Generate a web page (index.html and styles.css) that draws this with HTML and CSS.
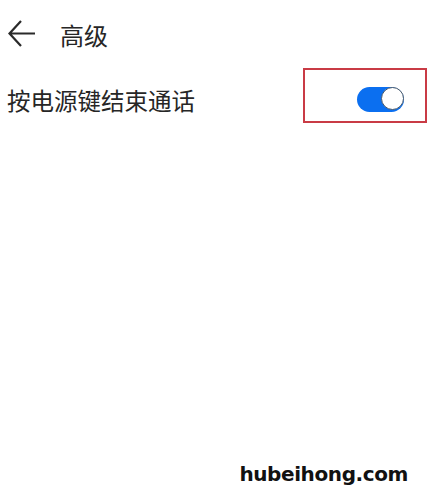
FILE: index.html
```html
<!DOCTYPE html>
<html lang="zh">
<head>
<meta charset="utf-8">
<link rel="stylesheet" href="styles.css">
</head>
<body>
<div class="page">
  <header class="bar">
    <svg class="back" width="28" height="28" viewBox="0 0 28 28"><path d="M13 1 L1.5 13.5 L13 26 M1.5 13.5 H27" fill="none" stroke="#2a2a2a" stroke-width="2.2"/></svg>
    <span class="title">高级</span>
  </header>
  <div class="row">
    <span class="label">按电源键结束通话</span>
    <div class="frame">
      <div class="toggle"><div class="knob"></div></div>
    </div>
  </div>
  <div class="spacer"></div>
  <div class="footer"><span class="mark">hubeihong.com</span></div>
</div>
</body>
</html>
```
FILE: styles.css
```css
html, body { margin: 0; padding: 0; background: #fff; }
body { width: 430px; height: 497px; overflow: hidden; }
.page { display: flex; flex-direction: column; height: 497px; font-family: "Noto Sans CJK SC", "Noto Sans", sans-serif; color: #262626; }
.bar { display: flex; align-items: center; height: 28px; margin-top: 20px; padding-left: 8px; }
.back { display: block; }
.title { font-size: 24px; line-height: 28px; margin-left: 24px; margin-top: 1px; }
.row { display: flex; align-items: center; justify-content: space-between; margin-top: 20px; padding-left: 7px; padding-right: 3px; }
.label { font-size: 23.5px; line-height: 28px; margin-top: 8px; }
.frame { width: 124px; height: 55px; border: 2.5px solid #c93b45; display: flex; align-items: center; justify-content: flex-end; padding-right: 21.5px; padding-top: 8px; box-sizing: border-box; }
.toggle { width: 47px; height: 25px; border-radius: 13px; background: #0b6ff0; position: relative; }
.knob { position: absolute; top: 0; right: 0; width: 21px; height: 21px; border-radius: 50%; background: #fff; border: 1.5px solid #4a5a6a; box-sizing: content-box; }
.spacer { flex: 1; }
.footer { display: flex; justify-content: flex-end; padding-right: 22px; margin-bottom: 11px; }
.mark { font-family: "DejaVu Sans", sans-serif; font-weight: bold; font-size: 20px; line-height: 24px; color: #111; letter-spacing: -0.4px; }
```
